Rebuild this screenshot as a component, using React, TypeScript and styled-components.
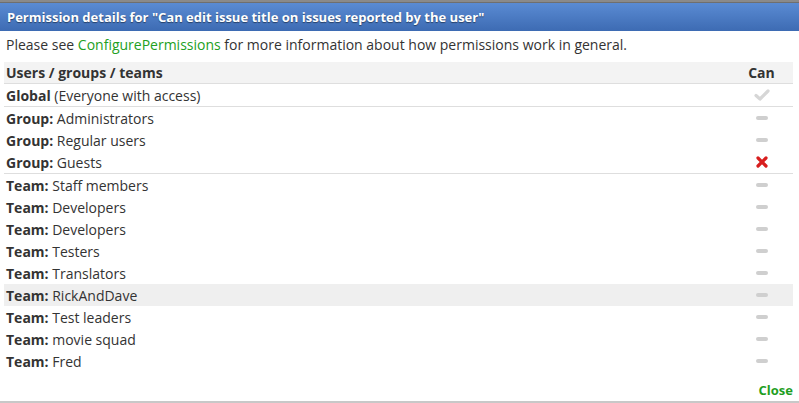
import React from "react";
import styled, { createGlobalStyle } from "styled-components";

const Global = createGlobalStyle`
  html, body { margin: 0; padding: 0; background: #fff; }
  body { font-family: "Open Sans", "DejaVu Sans", sans-serif; font-size: 14px; color: #333; }
`;

const Page = styled.div`
  width: 799px;
  height: 403px;
  display: flex;
  flex-direction: column;
  overflow: hidden;
  background: #fff;
`;

const BackStrip = styled.div`
  height: 3px;
  background: #8a8a8a;
  border-bottom: 1px solid #6f6f6f;
  box-sizing: border-box;
`;

const Header = styled.div`
  height: 28px;
  background: linear-gradient(#5a8bd3, #3d6bb3);
  display: flex;
  align-items: center;
  padding: 0 7px;
  color: #fff;
  font-weight: 700;
  font-size: 13px;
  text-shadow: 0 1px 1px rgba(0, 0, 0, 0.45);
`;

const Body = styled.div`
  flex: 1;
  display: flex;
  flex-direction: column;
  padding: 2px 6px 0 6px;
  border-bottom: 2px solid #c8c8c8;
`;

const Intro = styled.p`
  margin: 0;
  height: 24px;
  line-height: 24px;
  font-size: 14px;
  color: #333;
`;

const Link = styled.span`
  color: #22a022;
`;

const Table = styled.div`
  display: flex;
  flex-direction: column;
  margin: 5px 0 0 -2px;
`;

const Row = styled.div<{ $head?: boolean; $line?: boolean; $hl?: boolean }>`
  display: grid;
  grid-template-columns: 1fr 63px;
  align-items: center;
  height: ${(p) => (p.$head ? 21 : 22)}px;
  padding-left: 2px;
  box-sizing: content-box;
  background: ${(p) => (p.$head ? "#f3f3f3" : p.$hl ? "#efefef" : "transparent")};
  border-bottom: ${(p) => (p.$line ? "1px solid #dedede" : "none")};
`;

const Label = styled.div<{ $head?: boolean }>`
  font-size: 14px;
  font-weight: ${(p) => (p.$head ? 700 : 400)};
  color: #333;
  white-space: nowrap;
`;

const Can = styled.div`
  display: flex;
  justify-content: center;
  align-items: center;
  font-size: 14px;
  font-weight: 700;
  color: #333;
`;

const Dash = styled.span`
  display: block;
  width: 12px;
  height: 4px;
  border-radius: 2px;
  background: #cfcfcf;
`;

const Footer = styled.div`
  margin-top: auto;
  display: flex;
  justify-content: flex-end;
  padding-bottom: 2px;
`;

const Close = styled.span`
  color: #1f9e1f;
  font-weight: 700;
  font-size: 13px;
`;

const Check = () => (
  <svg width="16" height="12" viewBox="0 0 16 12">
    <path d="M2 6.5 L6 10 L14 2" fill="none" stroke="#d6d6d6" strokeWidth="3.2" strokeLinecap="round" strokeLinejoin="round" />
  </svg>
);

const Cross = () => (
  <svg width="12" height="12" viewBox="0 0 12 12">
    <path d="M2 2 L10 10 M10 2 L2 10" fill="none" stroke="#d81e1e" strokeWidth="3.2" strokeLinecap="round" />
  </svg>
);

type Item = { kind: string; name: string; icon: "check" | "dash" | "cross"; line?: boolean; hl?: boolean };

const rows: Item[] = [
  { kind: "Global", name: " (Everyone with access)", icon: "check", line: true },
  { kind: "Group:", name: " Administrators", icon: "dash" },
  { kind: "Group:", name: " Regular users", icon: "dash" },
  { kind: "Group:", name: " Guests", icon: "cross", line: true },
  { kind: "Team:", name: " Staff members", icon: "dash" },
  { kind: "Team:", name: " Developers", icon: "dash" },
  { kind: "Team:", name: " Developers", icon: "dash" },
  { kind: "Team:", name: " Testers", icon: "dash" },
  { kind: "Team:", name: " Translators", icon: "dash" },
  { kind: "Team:", name: " RickAndDave", icon: "dash", hl: true },
  { kind: "Team:", name: " Test leaders", icon: "dash" },
  { kind: "Team:", name: " movie squad", icon: "dash" },
  { kind: "Team:", name: " Fred", icon: "dash" },
];

export default function App() {
  return (
    <Page>
      <Global />
      <BackStrip />
      <Header>Permission details for "Can edit issue title on issues reported by the user"</Header>
      <Body>
        <Intro>
          Please see <Link>ConfigurePermissions</Link> for more information about how permissions work in general.
        </Intro>
        <Table>
          <Row $head $line>
            <Label $head>Users / groups / teams</Label>
            <Can>Can</Can>
          </Row>
          {rows.map((r, i) => (
            <Row key={i} $line={r.line} $hl={r.hl}>
              <Label>
                <b>{r.kind}</b>
                {r.name}
              </Label>
              <Can>{r.icon === "check" ? <Check /> : r.icon === "cross" ? <Cross /> : <Dash />}</Can>
            </Row>
          ))}
        </Table>
        <Footer>
          <Close>Close</Close>
        </Footer>
      </Body>
    </Page>
  );
}
